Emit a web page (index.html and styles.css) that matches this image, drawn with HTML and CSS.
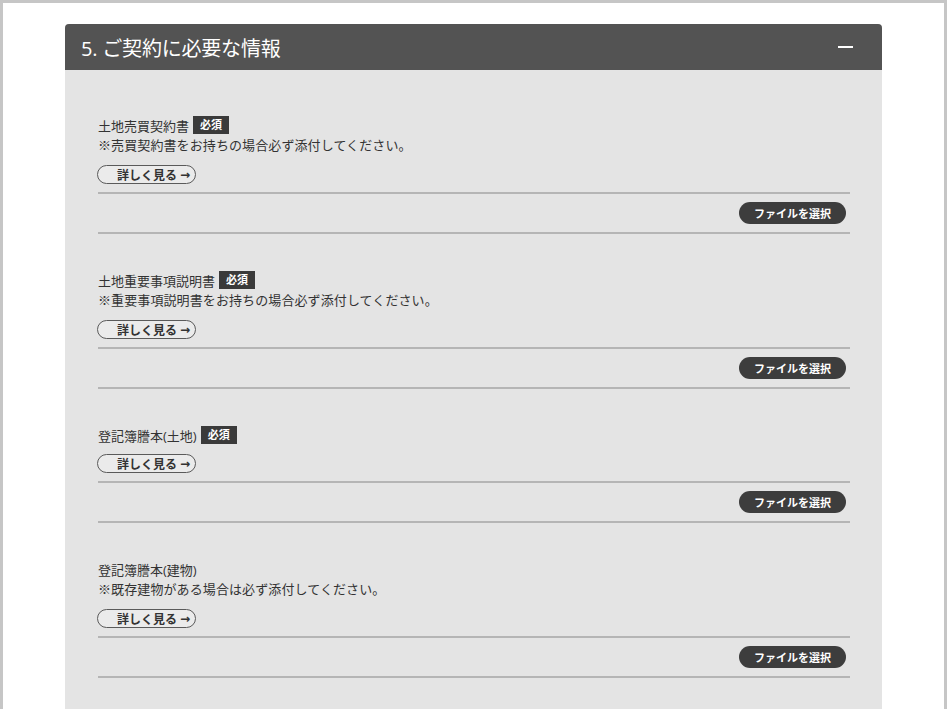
FILE: index.html
```html
<!DOCTYPE html>
<html lang="ja">
<head>
  <meta charset="UTF-8" />
  <title>ご契約に必要な情報</title>
  <meta name="viewport" content="width=device-width, initial-scale=1.0" />
  <link rel="stylesheet" href="styles.css">
</head>
<body>

  <div class="frame">
    <div class="panel">
      <div class="panel-head">
        <h2>5. ご契約に必要な情報</h2>
        <span class="toggle"></span>
      </div>

      <div class="panel-body">
        <!-- 土地売買契約書 -->
        <div class="doc">
          <div class="doc-title">土地売買契約書<span class="badge">必須</span></div>
          <p class="doc-note">※売買契約書をお持ちの場合必ず添付してください。</p>
          <button class="more-btn">詳しく見る <span class="arrow">→</span></button>
          <div class="file-row">
            <button class="file-btn">ファイルを選択</button>
          </div>
        </div>

        <!-- 土地重要事項説明書 -->
        <div class="doc">
          <div class="doc-title">土地重要事項説明書<span class="badge">必須</span></div>
          <p class="doc-note">※重要事項説明書をお持ちの場合必ず添付してください。</p>
          <button class="more-btn">詳しく見る <span class="arrow">→</span></button>
          <div class="file-row">
            <button class="file-btn">ファイルを選択</button>
          </div>
        </div>

        <!-- 登記簿謄本(土地) -->
        <div class="doc">
          <div class="doc-title">登記簿謄本(土地)<span class="badge">必須</span></div>
          <button class="more-btn">詳しく見る <span class="arrow">→</span></button>
          <div class="file-row">
            <button class="file-btn">ファイルを選択</button>
          </div>
        </div>

        <!-- 登記簿謄本(建物) -->
        <div class="doc">
          <div class="doc-title">登記簿謄本(建物)</div>
          <p class="doc-note">※既存建物がある場合は必ず添付してください。</p>
          <button class="more-btn">詳しく見る <span class="arrow">→</span></button>
          <div class="file-row">
            <button class="file-btn">ファイルを選択</button>
          </div>
        </div>
      </div>
    </div>
  </div>

</body>
</html>
```

FILE: styles.css
```css
body {
  margin: 0;
  font-family: 'Open Sans', 'Noto Sans CJK JP', sans-serif;
  background: #fff;
  color: #333;
}

.frame {
  border: 3px solid #c6c6c6;
  border-bottom: none;
  min-height: 720px;
  padding-top: 21px;
}

.panel {
  width: 817px;
  margin: 0 auto;
  background: #e4e4e4;
  border-radius: 4px 4px 0 0;
}

.panel-head {
  display: flex;
  justify-content: space-between;
  align-items: center;
  height: 46px;
  padding: 0 29px 0 16px;
  background: #535353;
  border-radius: 4px 4px 0 0;
}

.panel-head h2 {
  margin: 0;
  font-size: 20px;
  font-weight: normal;
  color: #fff;
  letter-spacing: -0.2px;
}

.toggle {
  display: block;
  width: 15px;
  height: 2px;
  background: #fff;
}

.panel-body {
  padding: 9px 32px 40px 33px;
}

.doc {
  padding-top: 36px;
}

.doc-title {
  display: flex;
  align-items: center;
  height: 20px;
  font-size: 13px;
}

.badge {
  display: inline-block;
  margin-left: 4px;
  padding: 0 7px;
  height: 18px;
  line-height: 18px;
  background: #3a3a3a;
  color: #fff;
  font-size: 11px;
  font-weight: bold;
}

.doc-note {
  margin: 0;
  font-size: 13px;
  line-height: 21px;
  letter-spacing: 0.1px;
}

.more-btn {
  display: flex;
  align-items: center;
  justify-content: center;
  gap: 3px;
  width: 99px;
  height: 19px;
  margin: 9px 0 8px -1px;
  padding: 0 0 0 14px;
  background: #ebebeb;
  border: 1px solid #5a5a5a;
  border-radius: 10px;
  font-family: inherit;
  font-size: 12px;
  font-weight: 600;
  color: #333;
  cursor: pointer;
}

.more-btn .arrow {
  font-family: 'DejaVu Sans', sans-serif;
  font-size: 12px;
}

.file-row {
  display: flex;
  justify-content: flex-end;
  padding: 8px 4px 8px 0;
  border-top: 2px solid #b5b5b5;
  border-bottom: 2px solid #b5b5b5;
}

.file-btn {
  width: 107px;
  height: 22px;
  padding: 0;
  background: #3d3d3d;
  border: none;
  border-radius: 11px;
  color: #fff;
  font-family: inherit;
  font-size: 11px;
  font-weight: 600;
  cursor: pointer;
}
```
